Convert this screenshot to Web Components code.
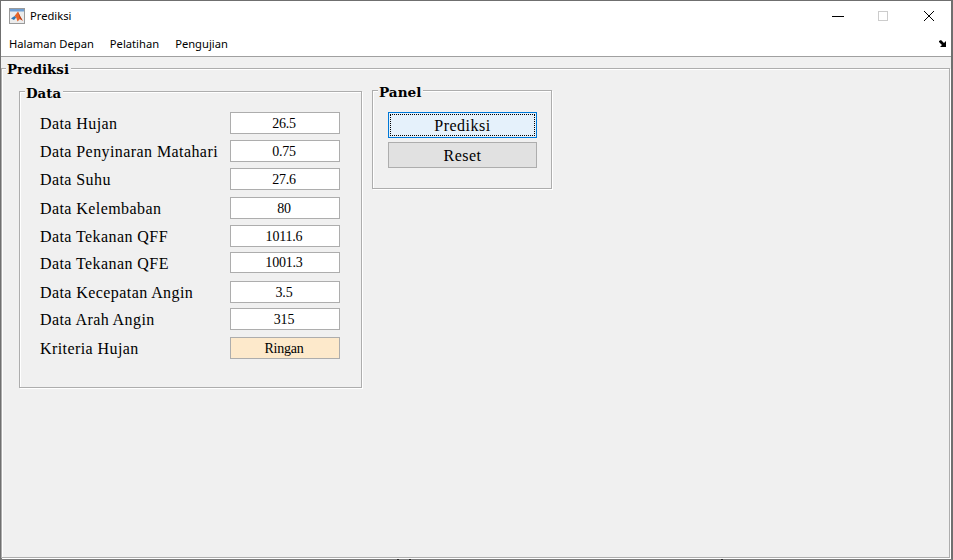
<!DOCTYPE html>
<html>
<head>
<meta charset="utf-8">
<title>Prediksi</title>
<style>
  html, body { margin: 0; padding: 0; height: 100%; overflow: hidden; background: #f0f0f0; }
</style>
</head>
<body>
<app-window>
  <group-box slot="content" title="Prediksi" style="--box-top:11px;--box-w:949px;--box-h:490px;--box-pad:22px 0 0 17px;--legend-left:4px;--legend-top:-6px;--legend-size:13.4px">
    <div style="display:flex;align-items:flex-start;gap:10px">
      <group-box title="Data" style="--box-top:0;--box-w:343px;--box-h:297px;--box-pad:20px 0 0 20px;--legend-left:5px;--legend-top:-5px;--legend-size:13.4px">
        <data-row label="Data Hujan" value="26.5"></data-row>
        <data-row label="Data Penyinaran Matahari" value="0.75" gap="6"></data-row>
        <data-row label="Data Suhu" value="27.6" gap="6"></data-row>
        <data-row label="Data Kelembaban" value="80" gap="7"></data-row>
        <data-row label="Data Tekanan QFF" value="1011.6" gap="6"></data-row>
        <data-row label="Data Tekanan QFE" value="1001.3" gap="5" height="21"></data-row>
        <data-row label="Data Kecepatan Angin" value="3.5" gap="8"></data-row>
        <data-row label="Data Arah Angin" value="315" gap="5"></data-row>
        <data-row label="Kriteria Hujan" value="Ringan" gap="7" result></data-row>
      </group-box>
      <group-box title="Panel" style="--box-top:-1px;--box-w:180px;--box-h:99px;--box-pad:21px 0 0 15px;--legend-left:5px;--legend-top:-5px;--legend-size:13.6px">
        <push-button focused>Prediksi</push-button>
        <push-button style="margin-top:4px">Reset</push-button>
      </group-box>
    </div>
  </group-box>
</app-window>

<script>
class AppWindow extends HTMLElement {
  constructor() {
    super();
    this.shadowDOM = this.attachShadow({ mode: "open" });
    this.shadowDOM.innerHTML = `
    <style>
      * { box-sizing: border-box; }
      :host {
        display: flex;
        flex-direction: column;
        box-sizing: border-box;
        position: relative;
        width: 953px;
        height: 560px;
        border-top: 1px solid #6f6f6f;
        border-left: 1px solid #6f6f6f;
        border-right: 2px solid #6f6f6f;
        border-bottom: 2px solid #7a7a7a;
        background: #f0f0f0;
        font-family: "Liberation Serif", serif;
        color: #000;
      }
      .title {
        height: 29px;
        flex: none;
        display: flex;
        align-items: center;
        background: #fff;
        padding-left: 8px;
      }
      .title svg.logo { flex: none; }
      .title span {
        margin-left: 5px;
        font: 11.2px "Noto Sans", "Open Sans", sans-serif;
      }
      .controls { margin: 0 -1px 0 auto; display: flex; }
      .controls div { width: 46px; height: 29px; display: flex; align-items: center; justify-content: center; }
      .controls svg { overflow: visible; }
      .menu {
        height: 27px;
        flex: none;
        display: flex;
        align-items: center;
        background: #fff;
        border-bottom: 1px solid #a0a0a0;
        padding-left: 8px;
        gap: 16px;
        font: 11.2px "Noto Sans", "Open Sans", sans-serif;
      }
      .menu .arrow { margin: 2px 4px 0 auto; }
      .content { flex: 1; position: relative; }
      .tick { position: absolute; bottom: -2px; width: 2px; height: 1px; background: #222; }
    </style>
    <div class="title">
      <svg class="logo" width="16" height="16" viewBox="0 0 16 16">
        <rect x="0.5" y="0.5" width="15" height="15" fill="#ececec" stroke="#9a9a9a"/>
        <rect x="1" y="1" width="14" height="2.5" fill="#6f9fd4"/>
        <path d="M2 10.5 L5.5 8 L7.2 9.6 L5 12 Z" fill="#2f78b8"/>
        <path d="M5.5 8 L9 3.5 L11 8 L13.8 12.8 L11 11 L8.5 13.5 L7.2 9.6 Z" fill="#e8662a"/>
        <path d="M9 3.5 L11 8 L13.8 12.8 L11 11 Z" fill="#b8401a"/>
      </svg>
      <span>Prediksi</span>
      <div class="controls">
        <div><svg width="12" height="12" viewBox="0 0 12 12"><path d="M1 6.5H13" stroke="#000" stroke-width="1"/></svg></div>
        <div><svg width="12" height="12" viewBox="0 0 12 12"><rect x="1.5" y="1.5" width="9" height="9" fill="none" stroke="#cccccc"/></svg></div>
        <div><svg width="12" height="12" viewBox="0 0 12 12"><path d="M1 1L11 11M11 1L1 11" stroke="#000" stroke-width="1"/></svg></div>
      </div>
    </div>
    <div class="menu">
      <span>Halaman Depan</span>
      <span>Pelatihan</span>
      <span>Pengujian</span>
      <svg class="arrow" width="8" height="8" viewBox="0 0 8 8"><path d="M0 1L2 0L5 3L7 1V7H1L3 5L0 2Z" fill="#000"/></svg>
    </div>
    <div class="content"><slot name="content"></slot></div>
    <i class="tick" style="left:396px"></i>
    <i class="tick" style="left:408px"></i>
    <i class="tick" style="left:720px"></i>
    `;
  }
}

class GroupBox extends HTMLElement {
  constructor() {
    super();
    this.shadowDOM = this.attachShadow({ mode: "open" });
  }

  connectedCallback() {
    this.shadowDOM.innerHTML = `
    <style>
      * { box-sizing: border-box; }
      :host {
        display: block;
        flex: none;
        box-sizing: border-box;
        position: relative;
        margin-top: var(--box-top);
        width: var(--box-w);
        height: var(--box-h);
        padding: var(--box-pad);
        border: 1px solid #adadad;
        box-shadow: 1px 1px 0 #fff, inset 1px 1px 0 #fff;
      }
      .legend {
        position: absolute;
        top: var(--legend-top);
        left: var(--legend-left);
        padding: 0 2px 0 1px;
        height: 12px;
        background: #f0f0f0;
        font: bold var(--legend-size) / 12px "DejaVu Serif", serif;
        color: #000;
      }
    </style>
    <div class="legend">${this.getAttribute("title")}</div>
    <slot></slot>
    `;
    this.removeAttribute("title");
  }
}

class DataRow extends HTMLElement {
  constructor() {
    super();
    this.shadowDOM = this.attachShadow({ mode: "open" });
  }

  connectedCallback() {
    const gap = this.getAttribute("gap") || 0;
    const height = this.getAttribute("height") || 22;
    const result = this.hasAttribute("result");
    this.shadowDOM.innerHTML = `
    <style>
      * { box-sizing: border-box; }
      :host {
        display: grid;
        grid-template-columns: 190px 110px;
        align-items: center;
        margin-top: ${gap}px;
        height: ${height}px;
      }
      .label {
        font: 16px "Liberation Serif", serif;
        letter-spacing: 0.42px;
        white-space: nowrap;
        padding-top: 2px;
      }
      .value {
        height: 100%;
        border: 1px solid #adadad;
        background: ${result ? "#fde9cb" : "#fff"};
        display: flex;
        align-items: center;
        justify-content: center;
        padding: 1px 2px 0 0;
        font: 14px "Liberation Serif", serif;
        letter-spacing: -0.2px;
      }
    </style>
    <div class="label">${this.getAttribute("label")}</div>
    <div class="value">${this.getAttribute("value")}</div>
    `;
  }
}

class PushButton extends HTMLElement {
  constructor() {
    super();
    this.shadowDOM = this.attachShadow({ mode: "open" });
  }

  connectedCallback() {
    const focused = this.hasAttribute("focused");
    this.shadowDOM.innerHTML = `
    <style>
      * { box-sizing: border-box; }
      :host {
        display: block;
        width: 149px;
        height: 26px;
      }
      button {
        display: block;
        width: 100%;
        height: 100%;
        padding: 2px 0 0;
        border: 1px solid ${focused ? "#0078d7" : "#adadad"};
        background: ${focused ? "#e5f1fb" : "#e1e1e1"};
        font: 16px "Liberation Serif", serif;
        letter-spacing: 0.5px;
        color: #000;
        position: relative;
      }
      .dots {
        position: absolute;
        inset: 1px;
        border: 1px dotted #000;
      }
    </style>
    <button>${focused ? '<span class="dots"></span>' : ""}<slot></slot></button>
    `;
  }
}

customElements.define("app-window", AppWindow);
customElements.define("group-box", GroupBox);
customElements.define("data-row", DataRow);
customElements.define("push-button", PushButton);
</script>
</body>
</html>
